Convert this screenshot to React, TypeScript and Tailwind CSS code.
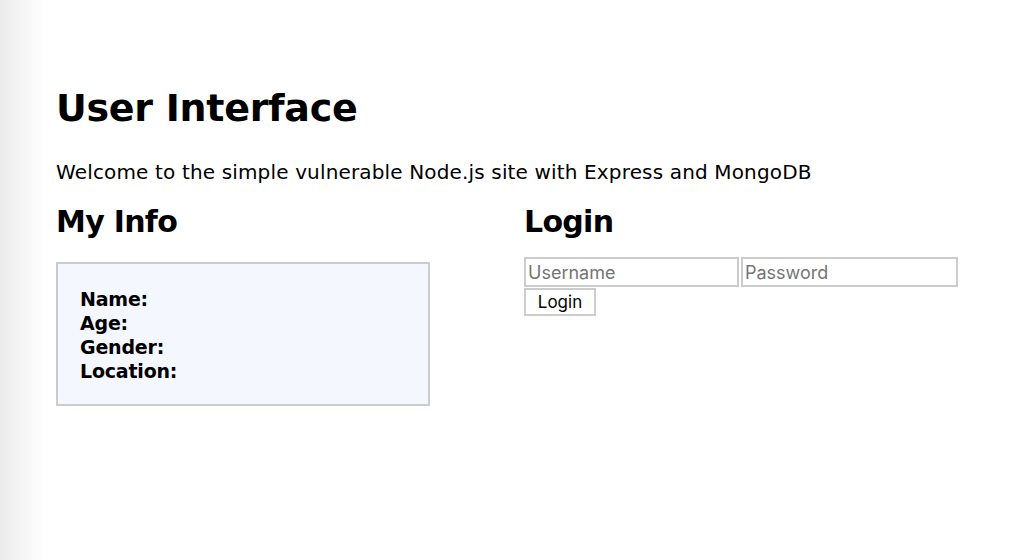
export default function App() {
  return (
    <div className="flex min-h-[560px] bg-white font-['DejaVu_Sans',sans-serif] text-black">
      {/* window shadow on the left edge */}
      <div className="w-[44px] shrink-0 bg-gradient-to-r from-[#ebebeb] to-white" />

      <div className="flex-1 pl-[12px] pt-[86px]">
        <h1 className="text-[38px] font-bold leading-[44px] tracking-[-0.3px]">User Interface</h1>
        <p className="mt-[30px] text-[20px] leading-[24px] tracking-[0.15px]">
          Welcome to the simple vulnerable Node.js site with Express and MongoDB
        </p>

        <div className="mt-[20px] flex">
          {/* My Info */}
          <div className="w-[468px]">
            <h2 className="text-[30px] font-bold leading-[36px] tracking-[-0.7px]">My Info</h2>
            <div className="mt-[22px] w-[374px] border-2 border-[#cccccc] bg-[#f4f7fe] pl-[22px] pt-[23px] pb-[21px]">
              <div className="text-[19px] font-bold leading-[24px] tracking-[-0.2px]">
                <div>Name:</div>
                <div>Age:</div>
                <div>Gender:</div>
                <div>Location:</div>
              </div>
            </div>
          </div>

          {/* Login */}
          <div>
            <h2 className="text-[30px] font-bold leading-[36px] tracking-[-0.7px]">Login</h2>
            <div className="mt-[17px] flex gap-[2px]">
              <input
                type="text"
                placeholder="Username"
                className="h-[30px] w-[215px] border-2 border-[#cccccc] px-[2px] font-['Inter',sans-serif] text-[18px] placeholder:text-[#757575]"
              />
              <input
                type="password"
                placeholder="Password"
                className="h-[30px] w-[217px] border-2 border-[#cccccc] px-[2px] font-['Inter',sans-serif] text-[18px] placeholder:text-[#757575]"
              />
            </div>
            <button className="mt-[1px] h-[28px] w-[72px] border-2 border-[#cccccc] bg-white font-['Inter',sans-serif] text-[17px] leading-none">
              Login
            </button>
          </div>
        </div>
      </div>
    </div>
  );
}
